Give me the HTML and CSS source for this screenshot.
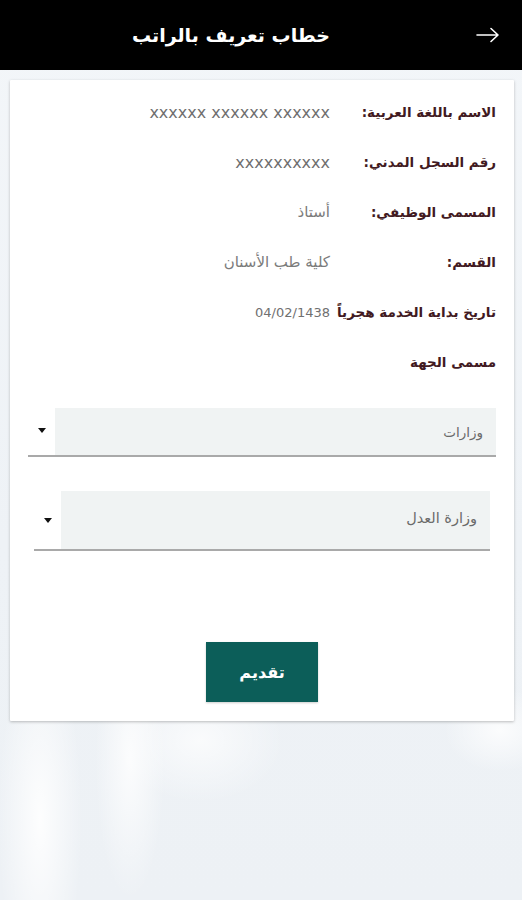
FILE: index.html
```html
<!DOCTYPE html>
<html lang="ar" dir="rtl">
<head>
<meta charset="utf-8">
<title>خطاب تعريف بالراتب</title>
<link rel="stylesheet" href="styles.css">
</head>
<body>
<header class="topbar">
  <button class="back" aria-label="رجوع">
    <svg width="24" height="16" viewBox="0 0 24 16"><path d="M1 8H22M15 1.5L22 8L15 14.5" fill="none" stroke="#fff" stroke-width="1.6" stroke-linecap="round" stroke-linejoin="round"/></svg>
  </button>
  <h1 class="title">خطاب تعريف بالراتب</h1>
</header>
<main class="card">
  <div class="row"><span class="label">الاسم باللغة العربية:</span><span class="value latin">xxxxxx xxxxxx xxxxxx</span></div>
  <div class="row"><span class="label">رقم السجل المدني:</span><span class="value latin">xxxxxxxxxx</span></div>
  <div class="row"><span class="label">المسمى الوظيفي:</span><span class="value">أستاذ</span></div>
  <div class="row"><span class="label">القسم:</span><span class="value">كلية طب الأسنان</span></div>
  <div class="row"><span class="label">تاريخ بداية الخدمة هجرياً</span><span class="value date">04/02/1438</span></div>
  <div class="row"><span class="label">مسمى الجهة</span></div>
  <div class="select first">
    <div class="select-box">وزارات</div>
    <div class="select-arrow"><span class="tri"></span></div>
  </div>
  <div class="select second">
    <div class="select-box">وزارة العدل</div>
    <div class="select-arrow"><span class="tri"></span></div>
  </div>
  <div class="actions"><button class="submit">تقديم</button></div>
</main>
</body>
</html>
```
FILE: styles.css
```css
* { box-sizing: border-box; }
html, body { margin: 0; padding: 0; }
body {
  width: 522px;
  height: 900px;
  overflow: hidden;
  font-family: "DejaVu Sans", "Noto Sans", sans-serif;
  background:
    radial-gradient(ellipse 60px 260px at 40px 820px, rgba(255,255,255,0.9), rgba(255,255,255,0) 70%),
    radial-gradient(ellipse 50px 200px at 130px 760px, rgba(255,255,255,0.8), rgba(255,255,255,0) 70%),
    radial-gradient(ellipse 120px 90px at 200px 740px, rgba(255,255,255,0.7), rgba(255,255,255,0) 70%),
    radial-gradient(ellipse 80px 60px at 500px 730px, rgba(255,255,255,0.8), rgba(255,255,255,0) 70%),
    linear-gradient(180deg, #f3f6f9 0%, #eef2f6 60%, #edf1f5 100%);
}
.topbar {
  height: 70px;
  background: #000;
  display: flex;
  align-items: center;
  padding-right: 22px;
}
.back {
  background: none;
  border: 0;
  padding: 0;
  width: 24px;
  height: 16px;
  display: flex;
}
.title {
  margin: 0 146px 0 0;
  color: #fff;
  font-size: 19px;
  font-weight: bold;
  line-height: 1;
}
.card {
  margin: 10px 8px 0 10px;
  background: #fff;
  padding: 7px 18px 19px;
  box-shadow: 0 1px 3px rgba(0,0,0,0.25);
  border-radius: 1px;
}
.row {
  height: 50px;
  display: flex;
  align-items: center;
}
.label {
  flex: 0 0 auto;
  min-width: 166px;
  padding-left: 4px;
  color: #421a22;
  font-size: 13.5px;
  font-weight: bold;
}
.value {
  color: #7b7b7b;
  font-size: 15px;
}
.value.latin {
  font-size: 16px;
  color: #6f6f6f;
  letter-spacing: 0;
}
.value.date {
  font-size: 13px;
  color: #707070;
}
.select {
  display: flex;
  border-bottom: 2px solid #a9a9a9;
}
.select.first { margin-top: 21px; }
.select.second { margin: 34px 6px 0; }
.select-box {
  flex: 1;
  background: #f0f3f3;
  color: #6a6a6a;
  font-size: 13.5px;
  display: flex;
  align-items: center;
  padding-right: 13px;
}
.second .select-box { font-size: 14.5px; }
.first .select-box { height: 47px; }
.second .select-box { height: 58px; padding-bottom: 4px; }
.select-arrow {
  width: 27px;
  display: flex;
  align-items: center;
  justify-content: center;
}
.first .select-arrow { padding-bottom: 3px; }
.tri {
  width: 0; height: 0;
  border-left: 4.5px solid transparent;
  border-right: 4.5px solid transparent;
  border-top: 5px solid #111;
}
.actions {
  display: flex;
  justify-content: center;
  margin-top: 91px;
}
.submit {
  width: 112px;
  height: 60px;
  background: #0c5e59;
  color: #fff;
  border: 0;
  border-radius: 0;
  font-family: "DejaVu Sans", sans-serif;
  font-size: 16px;
  font-weight: bold;
  box-shadow: 0 1px 2px rgba(0,0,0,0.2);
}
```
